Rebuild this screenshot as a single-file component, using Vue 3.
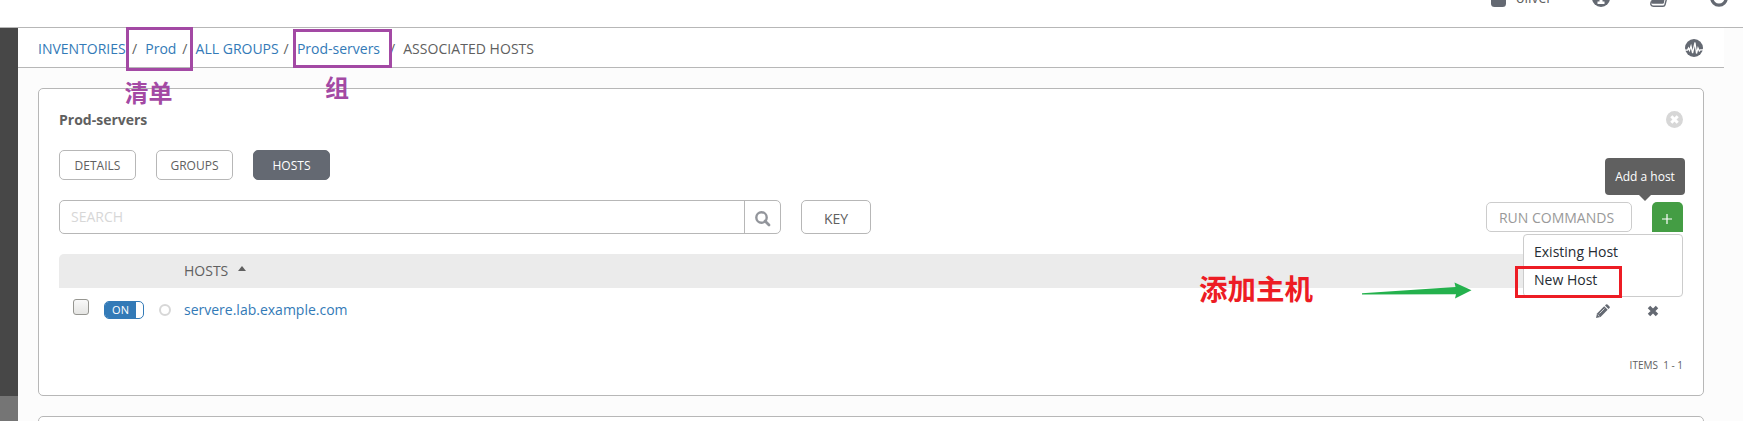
<script setup>
const crumbs = [
  { text: 'INVENTORIES', width: 94, link: true },
  { text: 'Prod', width: 37, link: true },
  { text: 'ALL GROUPS', width: 88, link: true },
  { text: 'Prod-servers', width: 93, link: true },
]
const tabs = ['DETAILS', 'GROUPS', 'HOSTS']
</script>

<template>
  <div class="page">
    <header class="topbar">
      <div class="topnav">
        <svg class="user" width="15" height="18" viewBox="0 0 15 18"><circle cx="7.5" cy="4" r="4" /><rect y="7" width="15" height="11" rx="3.5" /></svg>
        <span class="username">oliver</span>
        <svg class="about" width="18" height="18" viewBox="0 0 18 18"><circle cx="9" cy="9" r="9" /><path d="M7.500 8h3v4.500h2V15h-7v-2.500h2z" fill="#fff" /></svg>
        <svg class="book" width="19" height="18" viewBox="0 0 19 18"><path d="M5 1h11l-2 12.500q-.3 1.200-1.500 1.200H2.500Q.8 14.700 1.200 12z" /><path d="M1.300 12.500Q-.3 17.200 3.500 17.200H13q1.600 0 2-1.500L18 4" fill="none" stroke="#646972" stroke-width="1.400" /></svg>
        <svg class="power" width="18" height="18" viewBox="0 0 18 18"><circle cx="9" cy="9" r="7.200" fill="none" stroke="#646972" stroke-width="3.300" /></svg>
      </div>
    </header>
    <div class="body">
      <aside class="side"><div class="side-end"></div></aside>
      <main class="main">
        <nav class="crumbbar">
          <template v-for="c in crumbs" :key="c.text">
            <a class="crumb" :style="{ width: c.width + 'px' }">{{ c.text }}</a><span class="slash">/</span>
          </template>
          <span class="current">ASSOCIATED HOSTS</span>
          <svg class="activity" width="18" height="18" viewBox="0 0 18 18"><circle cx="9" cy="9" r="9" fill="#646972" /><path d="M0 11h2.500l1-2 1 2.500L6 7l1.600 7L10 3.500l1.500 11L13 9l1.300 3 1-1.200H18" fill="none" stroke="#fff" stroke-width="1.250" /></svg>
        </nav>
        <section class="panel">
          <div class="titlebar">
            <h1>Prod-servers</h1>
            <svg class="close" width="17" height="17" viewBox="0 0 17 17"><circle cx="8.500" cy="8.500" r="8.500" fill="#d7d7d7" /><path d="M5.300 5.300l6.400 6.400M11.700 5.300l-6.400 6.400" stroke="#fff" stroke-width="3" /></svg>
          </div>
          <div class="tabs"><button v-for="t in tabs" :key="t" :class="['tab', { active: t === 'HOSTS' }]">{{ t }}</button></div>
          <div class="tools">
            <div class="search">
              <span class="placeholder">SEARCH</span>
              <span class="lens"><svg width="16" height="16" viewBox="0 0 16 16" fill="none" stroke="#92959b"><circle cx="6.500" cy="6.500" r="5.200" stroke-width="2.400" /><path d="M10 10l4 4" stroke-width="2.800" stroke-linecap="round" /></svg></span>
            </div>
            <button class="key">KEY</button>
            <button class="run">RUN COMMANDS</button>
            <div class="add">
              <svg width="10" height="10" viewBox="0 0 10 10"><path d="M5 0v10M0 5h10" stroke="#fff" stroke-width="1.200" /></svg>
              <div class="tooltip">Add a host</div>
              <div class="menu"><div>Existing Host</div><div>New Host</div></div>
            </div>
          </div>
          <div class="thead"><span>HOSTS</span><i class="sort"></i></div>
          <div class="row">
            <span class="check"></span>
            <span class="toggle"><b>ON</b></span>
            <span class="status"></span>
            <a class="host">servere.lab.example.com</a>
            <svg class="pencil" width="14" height="14" viewBox="0 0 14 14"><path d="M0 14l1-4.500L8.200 2.300l3.500 3.500L4.500 13z" /><path d="M9 1.500l1-1q.7-.7 1.500 0l2 2q.8.800 0 1.500l-1 1z" /><path d="M3.500 9.500l5-5M1.700 10.500l1.800 1.800" stroke="#fff" stroke-width=".7" /></svg>
            <svg class="remove" width="12" height="12" viewBox="0 0 12 12"><path d="M2 2l8 8M10 2l-8 8" stroke="#646972" stroke-width="3.500" /></svg>
          </div>
          <div class="pager">ITEMS&nbsp; 1 - 1</div>
        </section>
        <section class="panel next"></section>
      </main>
    </div>
    <div class="box box-prod"></div>
    <div class="box box-group"></div>
    <div class="box box-new"></div>
    <div class="note note-inventory">清单</div>
    <div class="note note-group">组</div>
    <div class="note note-add">添加主机</div>
    <svg class="arrow" width="110" height="18" viewBox="0 0 110 18"><path d="M0 11.200L93.500 5 92.500.500 109.500 8.200 93 16.500 94 12.200 0 12.500z" fill="#24b14d" /></svg>
  </div>
</template>

<style>
body { margin: 0; overflow: hidden; }
</style>

<style scoped>
* { box-sizing: border-box; }
.page { position: relative; width: 1743px; height: 421px; overflow: hidden; background: #fcfcfc; font: 14px/20px "Open Sans", sans-serif; color: #606060; }
.topbar { height: 28px; overflow: hidden; background: #fff; border-bottom: 1px solid #b7b7b7; }
.topnav { display: flex; margin-top: -11px; padding-left: 1491px; fill: #646972; }
.topnav svg { flex: none; }
.username { width: 85px; padding-left: 10px; margin-top: -1px; }
.book { margin-left: 40px; }
.about { margin-left: 1px; }
.power { margin-left: 41px; }
.body { display: flex; height: 393px; }
.side { width: 18px; background: #474747; display: flex; align-items: flex-end; }
.side-end { width: 100%; height: 25px; background: #757575; }
.main { flex: 1; overflow: hidden; }
.crumbbar { width: 1706px; height: 40px; background: #fff; border-bottom: 1px solid #b7b7b7; display: flex; align-items: center; padding: 2px 21px 0 20px; white-space: nowrap; }
.crumb { color: #337ab7; }
.slash { width: 13.300px; }
.current { letter-spacing: .04px; }
.activity { margin: -1px 0 0 auto; }
.panel { width: 1666px; height: 308px; margin: 20px 0 0 20px; border: 1px solid #b7b7b7; border-radius: 5px; background: #fff; padding: 20px; }
.titlebar { display: flex; justify-content: space-between; align-items: center; height: 21px; }
h1 { margin: 0; font-size: 14px; line-height: 20px; font-weight: 700; }
.tabs { display: flex; gap: 20px; margin-top: 20px; }
button { font-family: inherit; color: #606060; background: #fff; border: 1px solid #b7b7b7; border-radius: 5px; padding: 0; }
.tab { width: 77px; height: 30px; font-size: 12px; padding-top: 1px; }
.tab.active { background: #646972; border-color: #646972; color: #fff; }
.tools { display: flex; margin-top: 20px; height: 34px; }
.search { width: 722px; border: 1px solid #b7b7b7; border-radius: 5px; display: flex; align-items: center; justify-content: space-between; padding-left: 11px; }
.placeholder { color: #d7d7d7; }
.lens { width: 36px; height: 32px; border-left: 1px solid #b7b7b7; display: flex; align-items: center; padding: 4px 0 0 10px; }
.key { width: 70px; height: 34px; margin-left: 20px; font-size: 14px; padding-top: 2px; }
.run { width: 146px; height: 30px; margin: 2px 20px 0 auto; font-size: 14px; color: #999; border-color: #ccc; padding-right: 5px; }
.add { position: relative; width: 31px; height: 30px; margin-top: 2px; background: #449d44; border-radius: 5px 5px 0 0; display: flex; align-items: center; justify-content: center; padding: 3px 1px 0 0; }
.tooltip { position: absolute; right: -2px; top: -44px; width: 80px; height: 37px; border-radius: 4px; background: #606060; color: #fff; font-size: 12px; line-height: 37px; text-align: center; }
.tooltip::after { content: ""; position: absolute; left: 34px; top: 37px; border: 6px solid transparent; border-top-color: #606060; border-bottom: 0; }
.menu { position: absolute; z-index: 2; right: 0; top: 32px; width: 160px; height: 63px; border: 1px solid #ccc; border-radius: 4px; background: #fff; color: #262c33; padding: 3px 10px; line-height: 28px; }
.thead { height: 34px; margin-top: 20px; background: #ebebeb; border-radius: 5px 0 0 0; display: flex; align-items: center; padding-left: 125px; }
.sort { margin: -6px 0 0 10px; border: 4.500px solid transparent; border-bottom: 5px solid #606060; border-top: 0; }
.row { display: flex; height: 44px; align-items: center; padding-left: 14px; }
.check { width: 16px; height: 16px; margin-top: -6px; border: 1px solid #969691; border-radius: 3px; background: linear-gradient(#f9f9f9, #e5e5e3); }
.toggle { width: 40px; height: 18px; margin-left: 15px; border: 1px solid #337ab7; border-radius: 5px; overflow: hidden; background: #fff; }
.toggle b { display: block; width: 31px; height: 16px; background: #337ab7; color: #fff; font-size: 11px; font-weight: 400; line-height: 16px; text-align: center; }
.status { width: 12px; height: 12px; margin-left: 15px; border: 2px solid #d7d7d7; border-radius: 50%; }
.host { margin-left: 13px; color: #337ab7; }
.pencil { margin-left: auto; margin-right: 37px; fill: #646972; }
.remove { margin-right: 24px; }
.pencil, .remove { margin-top: 2px; }
.pager { text-align: right; font-size: 10px; line-height: 14px; margin-top: 26px; }
.box { position: absolute; z-index: 3; border: 3px solid #a349a4; }
.box-prod { left: 126px; top: 27px; width: 67px; height: 44px; }
.box-group { left: 293px; top: 29px; width: 99px; height: 39px; }
.box-new { left: 1515px; top: 266px; width: 107px; height: 32px; border-color: #ed1c24; }
.note { position: absolute; font-family: "Noto Sans CJK SC", sans-serif; font-weight: 700; color: #a349a4; white-space: nowrap; font-size: 24px; line-height: 30px; }
.note-inventory { left: 124.500px; top: 77px; }
.note-group { left: 325px; top: 72px; }
.note-add { left: 1199px; top: 270px; font-size: 28.500px; line-height: 36px; color: #ed1c24; }
.arrow { position: absolute; left: 1362px; top: 282px; }
</style>
